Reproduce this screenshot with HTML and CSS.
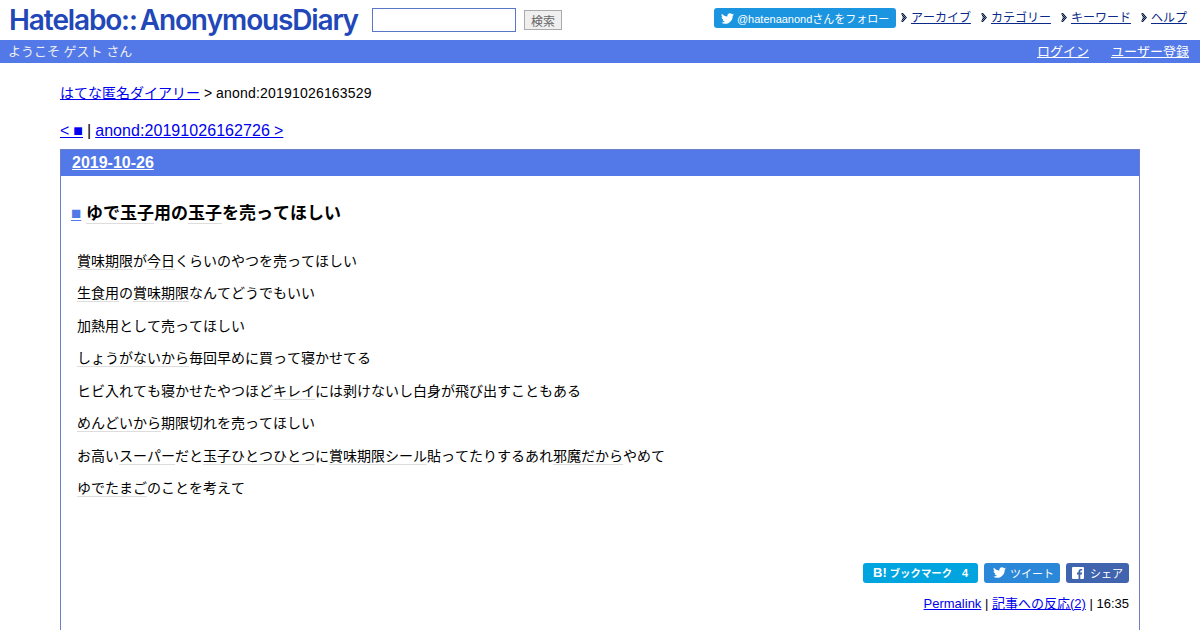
FILE: index.html
```html
<!DOCTYPE html>
<html lang="ja">
<head>
<meta charset="utf-8">
<title>ゆで玉子用の玉子を売ってほしい</title>
<link rel="stylesheet" href="styles.css">
</head>
<body>
<header class="top">
  <div class="top-left">
    <a class="logo" href="#">Hatelabo::<span class="logo-b">AnonymousDiary</span></a>
    <form class="search">
      <input class="search-input" type="text">
      <button class="search-btn" type="button">検索</button>
    </form>
  </div>
  <nav class="top-right">
    <a class="follow" href="#">
      <svg class="ico-tw" viewBox="0 0 24 24"><path d="M23.95 4.57a10 10 0 0 1-2.82.77 4.96 4.96 0 0 0 2.16-2.72c-.95.56-2 .96-3.12 1.19a4.92 4.92 0 0 0-8.38 4.48C7.69 8.1 4.07 6.13 1.64 3.16a4.82 4.82 0 0 0-.67 2.47c0 1.71.87 3.21 2.19 4.1a4.9 4.9 0 0 1-2.23-.62v.06a4.92 4.92 0 0 0 3.95 4.83 5 5 0 0 1-2.21.08 4.94 4.94 0 0 0 4.6 3.42A9.87 9.87 0 0 1 0 19.54a14 14 0 0 0 7.56 2.21c9.05 0 14-7.5 14-13.98 0-.21 0-.42-.02-.63a9.94 9.94 0 0 0 2.46-2.55z"/></svg>
      @hatenaanondさんをフォロー
    </a>
    <a class="navlink" href="#">アーカイブ</a>
    <a class="navlink" href="#">カテゴリー</a>
    <a class="navlink" href="#">キーワード</a>
    <a class="navlink" href="#">ヘルプ</a>
  </nav>
</header>
<div class="userbar">
  <span>ようこそ ゲスト さん</span>
  <div class="userlinks"><a href="#">ログイン</a><a href="#">ユーザー登録</a></div>
</div>
<main class="body">
  <p class="crumb"><a href="#">はてな匿名ダイアリー</a> &gt; <span class="crumb-id">anond:20191026163529</span></p>
  <p class="pager"><a href="#">&lt; ■</a> | <a class="pager-next" href="#">anond:20191026162726 &gt;</a></p>
  <section class="day">
    <h2 class="date"><a href="#">2019-10-26</a></h2>
    <div class="section">
      <h3 class="title"><a class="sq" href="#">■</a> <a class="kw" href="#">ゆで</a><a class="kw" href="#">玉子</a>用の<a class="kw" href="#">玉子</a>を売ってほしい</h3>
      <p><a class="kw" href="#">賞味期限</a>が<a class="kw" href="#">今日</a>くらいのやつを売ってほしい</p>
      <p><a class="kw" href="#">生食</a><a class="kw" href="#">用</a>の<a class="kw" href="#">賞味期限</a>なんてどうでもいい</p>
      <p>加熱用として売ってほしい</p>
      <p><a class="kw" href="#">しょうがない</a><a class="kw" href="#">から</a>毎回早めに買って寝かせてる</p>
      <p>ヒビ入れても寝かせたやつほど<a class="kw" href="#">キレイ</a>には剥けないし白身が飛び出すこともある</p>
      <p><a class="kw" href="#">めんどい</a><a class="kw" href="#">から</a>期限切れを売ってほしい</p>
      <p>お高い<a class="kw" href="#">スーパー</a>だと<a class="kw" href="#">玉子</a><a class="kw" href="#">ひとつひとつ</a>に<a class="kw" href="#">賞味期限</a><a class="kw" href="#">シール</a>貼ってたりするあれ<a class="kw" href="#">邪魔だから</a>やめて</p>
      <p><a class="kw" href="#">ゆでたまご</a>のことを考えて</p>
      <div class="share">
        <a class="sbtn hb" href="#"><b class="hb-b">B!</b><b>ブックマーク</b><span class="count">4</span></a>
        <a class="sbtn tw" href="#"><svg class="ico-tw big" viewBox="0 0 24 24"><path d="M23.95 4.57a10 10 0 0 1-2.82.77 4.96 4.96 0 0 0 2.16-2.72c-.95.56-2 .96-3.12 1.19a4.92 4.92 0 0 0-8.38 4.48C7.69 8.1 4.07 6.13 1.64 3.16a4.82 4.82 0 0 0-.67 2.47c0 1.71.87 3.21 2.19 4.1a4.9 4.9 0 0 1-2.23-.62v.06a4.92 4.92 0 0 0 3.95 4.83 5 5 0 0 1-2.21.08 4.94 4.94 0 0 0 4.6 3.42A9.87 9.87 0 0 1 0 19.54a14 14 0 0 0 7.56 2.21c9.05 0 14-7.5 14-13.98 0-.21 0-.42-.02-.63a9.94 9.94 0 0 0 2.46-2.55z"/></svg>ツイート</a>
        <a class="sbtn fb" href="#"><svg class="ico-fb" viewBox="0 0 12 12"><path d="M1 0h10a1 1 0 0 1 1 1v10a1 1 0 0 1-1 1H8.3V7.4h1.5l.3-1.8H8.3V4.500c0-.5.2-.9.9-.9h1V2c-.3 0-.8-.1-1.400-.1-1.400 0-2.300.9-2.300 2.400v1.300H5v1.800h1.500V12H1a1 1 0 0 1-1-1V1a1 1 0 0 1 1-1z"/></svg>シェア</a>
      </div>
      <p class="foot"><a href="#">Permalink</a> | <a href="#">記事への反応(2)</a> | 16:35</p>
    </div>
  </section>
</main>
</body>
</html>
```
FILE: styles.css
```css
html, body {
  margin: 0;
  height: 630px;
  overflow: hidden;
  background: #fff;
}
body {
  font-family: "Liberation Sans", "Noto Sans CJK JP", sans-serif;
  font-size: 14px;
  color: #000;
  font-kerning: none;
}
a { color: #0000ee; }
.top {
  height: 40px;
  display: flex;
  justify-content: space-between;
  box-sizing: border-box;
}
.top-left {
  display: flex;
  align-items: flex-start;
}
.logo {
  font-family: "Inter", sans-serif;
  font-weight: 600;
  font-size: 28px;
  line-height: 41px;
  letter-spacing: -1.15px;
  color: #2247b8;
  text-decoration: none;
  margin-left: 9px;
  width: 350px;
  white-space: nowrap;
}
.logo-b { margin-left: 3px; }
.search {
  display: flex;
  align-items: center;
  margin: 8px 0 0 13px;
  gap: 8px;
}
.search-input {
  box-sizing: border-box;
  width: 144px;
  height: 24px;
  border: 1px solid #5a78c8;
  padding: 0;
  background: #fff;
}
.search-btn {
  box-sizing: border-box;
  width: 38px;
  height: 20px;
  padding: 0;
  background: #efefef;
  border: 1px solid #aaa;
  color: #666;
  font: 12px "Liberation Sans", "Noto Sans CJK JP", sans-serif;
}
.top-right {
  display: flex;
  align-items: flex-start;
  padding: 8px 13px 0 0;
  font-size: 12px;
}
.follow {
  display: flex;
  align-items: center;
  gap: 3px;
  box-sizing: border-box;
  width: 182px;
  height: 20px;
  padding-left: 7px;
  background: #1b95e0;
  color: #fff;
  border-radius: 3px;
  text-decoration: none;
  font-size: 11px;
  white-space: nowrap;
}
.ico-tw { width: 13px; height: 13px; fill: #fff; flex: none; }
.navlink {
  color: #0a2a8a;
  margin-left: 20px;
  line-height: 20px;
  position: relative;
}
.follow + .navlink { margin-left: 15px; }
.navlink::before {
  content: "";
  position: absolute;
  left: -10px;
  top: 5px;
  width: 6px;
  height: 9px;
  background: conic-gradient(#0a1a3a 25%, #7f8ca0 0 50%, #0a1a3a 0 75%, #7f8ca0 0) 0 0 / 2px 2px;
  clip-path: polygon(0 0, 40% 0, 100% 50%, 40% 100%, 0 100%, 30% 50%);
}
.userbar {
  height: 23px;
  background: #5279e7;
  color: #eee;
  font-size: 13px;
  line-height: 23px;
  display: flex;
  justify-content: space-between;
  padding: 0 11px 0 8px;
}
.userlinks { display: flex; gap: 22px; }
.userlinks a { color: #fff; }
.body { padding: 0 60px; }
.crumb {
  margin: 0;
  padding-top: 22px;
  line-height: 16px;
  font-size: 14px;
}
.crumb-id { letter-spacing: 0.2px; }
.pager {
  margin: 0;
  padding-top: 21px;
  line-height: 18px;
  font-size: 16px;
  word-spacing: -0.45px;
}
.pager-next { letter-spacing: 0.06px; }
.day {
  margin-top: 9px;
  height: 481px;
  border: 1px solid #6c7fc8;
  border-bottom: 0;
  box-sizing: border-box;
}
.date {
  margin: 0;
  height: 26px;
  background: #5279e7;
  padding-left: 11px;
  font-size: 16px;
  line-height: 26px;
}
.date a { color: #fff; }
.section { padding: 0 10px 0 16px; }
.title {
  margin: 0 0 0 -6px;
  padding-top: 28px;
  font-size: 17px;
  line-height: 20px;
  font-weight: 700;
}
.title .sq { color: #5279e7; }
.kw {
  color: inherit;
  text-decoration: none;
  border-bottom: 1px solid #ddd;
}
.section > p {
  margin: 0;
  padding-top: 16.5px;
  line-height: 16px;
}
.section > .title + p { padding-top: 28.75px; }
.share {
  display: flex;
  justify-content: flex-end;
  gap: 6px;
  margin-top: 66.25px;
}
.sbtn {
  display: flex;
  align-items: center;
  box-sizing: border-box;
  height: 20px;
  border-radius: 3px;
  color: #fff;
  font-size: 11px;
  text-decoration: none;
  white-space: nowrap;
}
.hb { background: #00a4de; width: 115px; padding-left: 10px; gap: 3px; font-size: 10.4px; }
.hb-b { font-size: 13px; }
.hb .count { margin-left: 7px; font-weight: 700; font-size: 11px; }
.tw { background: #2b87d8; width: 76px; padding-left: 9px; gap: 4px; }
.fb { background: #4064ad; width: 63px; padding-left: 6px; gap: 6px; }
.ico-fb { width: 12px; height: 12px; fill: #fff; }
.section > p.foot {
  padding-top: 13px;
  text-align: right;
  font-size: 13px;
}
```
